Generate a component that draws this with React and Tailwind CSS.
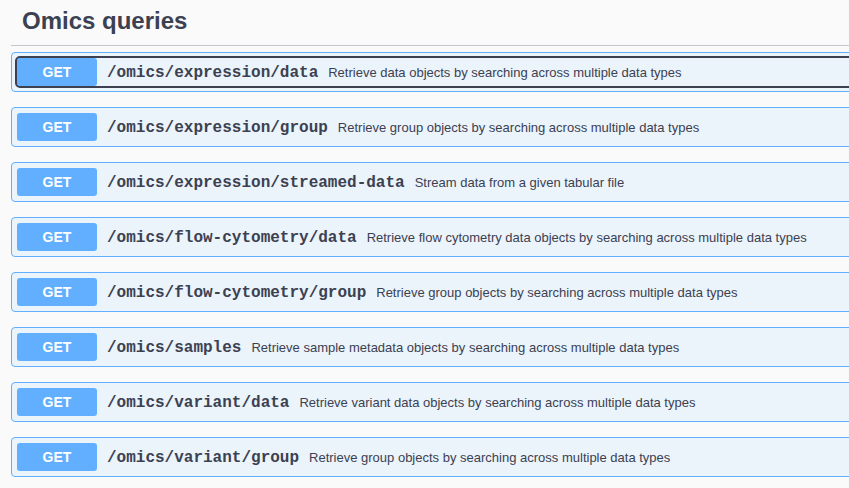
import React from 'react';

const endpoints = [
    { path: '/omics/expression/data', desc: 'Retrieve data objects by searching across multiple data types' },
    { path: '/omics/expression/group', desc: 'Retrieve group objects by searching across multiple data types' },
    { path: '/omics/expression/streamed-data', desc: 'Stream data from a given tabular file' },
    { path: '/omics/flow-cytometry/data', desc: 'Retrieve flow cytometry data objects by searching across multiple data types' },
    { path: '/omics/flow-cytometry/group', desc: 'Retrieve group objects by searching across multiple data types' },
    { path: '/omics/samples', desc: 'Retrieve sample metadata objects by searching across multiple data types' },
    { path: '/omics/variant/data', desc: 'Retrieve variant data objects by searching across multiple data types' },
    { path: '/omics/variant/group', desc: 'Retrieve group objects by searching across multiple data types' },
];

const Operation = ({ path, desc, focused }) => (
    <div className="mb-[15px] rounded-[4px] border border-[#61affe] bg-[#ebf3fb] p-[5px]">
        <div
            className={`flex items-center rounded-[3px] ${focused ? 'outline-2 outline-[#3b4151]' : ''}`}
        >
            <span className="flex h-[28px] w-[80px] shrink-0 items-center justify-center rounded-[3px] bg-[#61affe] text-[14px] font-bold text-white">
                GET
            </span>
            <span
                className="whitespace-nowrap px-[10px] pt-[2px] text-[16px] font-bold text-[#3b4151]"
                style={{ fontFamily: '"Liberation Mono", monospace' }}
            >
                {path}
            </span>
            <span className="whitespace-nowrap pt-[2px] text-[13px] text-[#3b4151]">{desc}</span>
        </div>
    </div>
);

const App = () => {
    return (
        <div
            className="h-[488px] w-[849px] overflow-hidden bg-[#fafafa]"
            style={{ fontFamily: '"Liberation Sans", Arial, sans-serif' }}
        >
            <div className="ml-[11px] w-[900px]">
                {/* Tag header */}
                <h3 className="mb-[6px] border-b border-[#c4c6cb] pt-[5px] pb-[9px] pl-[11px] text-[24px] font-bold leading-[31px] text-[#3b4151]">
                    Omics queries
                </h3>

                {endpoints.map((ep, i) => (
                    <Operation key={ep.path} path={ep.path} desc={ep.desc} focused={i === 0} />
                ))}
            </div>
        </div>
    );
};

export default App;
